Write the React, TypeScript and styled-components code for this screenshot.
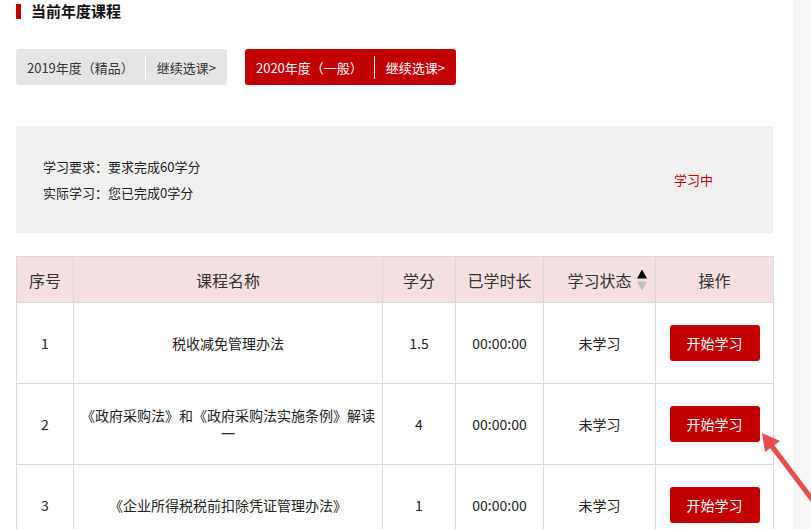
import React from 'react';
import styled, { createGlobalStyle, css } from 'styled-components';

interface Course {
    id: number;
    name: string;
    credit: string;
    duration: string;
    status: string;
}

interface YearProps {
    active?: boolean;
}

const courses: Course[] = [
    { id: 1, name: '税收减免管理办法', credit: '1.5', duration: '00:00:00', status: '未学习' },
    { id: 2, name: '《政府采购法》和《政府采购法实施条例》解读一', credit: '4', duration: '00:00:00', status: '未学习' },
    { id: 3, name: '《企业所得税税前扣除凭证管理办法》', credit: '1', duration: '00:00:00', status: '未学习' },
];

const columnWidths = [57, 309, 73, 88, 112, 118];

const GlobalStyle = createGlobalStyle`
    html, body {
        margin: 0;
        padding: 0;
        height: 529px;
        overflow: hidden;
        background: #fff;
    }
    body {
        font-family: "Microsoft YaHei", "Noto Sans CJK SC", "Noto Sans", sans-serif;
        color: #222;
    }
`

const Page = styled.div`
    position: relative;
    display: flex;
    width: 811px;
    height: 529px;
    overflow: hidden;
`

const Main = styled.div`
    width: 793px;
    box-sizing: border-box;
    padding: 0 20px 0 16px;
`

const SideStrip = styled.div`
    flex: 1;
    background: #f7f7f7;
`

const TitleRow = styled.div`
    display: flex;
    align-items: center;
    gap: 10px;
    height: 22px;
`

const TitleBar = styled.span`
    display: block;
    width: 5px;
    height: 15px;
    background: #c30000;
`

const Title = styled.h2`
    margin: 0;
    font-size: 15px;
    line-height: 22px;
    font-weight: bold;
    color: #111;
`

const YearRow = styled.div`
    display: flex;
    gap: 18px;
    margin-top: 27px;
`

const YearButton = styled.div<YearProps>`
    display: flex;
    align-items: center;
    justify-content: center;
    gap: 11px;
    width: 211px;
    height: 36px;
    border-radius: 3px;
    font-size: 13px;
    background: #e5e5e5;
    color: #333;
    cursor: pointer;

    ${({active}) => active && css`
        background: #c30000;
        color: #fff;
    `}
`

const Divider = styled.span`
    display: block;
    width: 1px;
    height: 23px;
    background: #fff;
`

const InfoBox = styled.div`
    display: flex;
    align-items: center;
    justify-content: space-between;
    height: 107px;
    margin-top: 41px;
    padding: 0 60px 0 27px;
    background: #f0f0f0;
    font-size: 13px;
`

const InfoLine = styled.div`
    line-height: 26px;
    color: #222;
`

const Status = styled.span`
    color: #c30000;
    font-size: 13px;
`

const Table = styled.table`
    width: 757px;
    margin-top: 23px;
    border-collapse: collapse;
    table-layout: fixed;
`

const HeadCell = styled.th`
    height: 45px;
    padding: 0;
    border: 1px solid #d9d9d9;
    background: #f4e0e0;
    font-size: 16px;
    font-weight: normal;
    color: #333;
    text-align: center;
`

const Cell = styled.td`
    height: 80px;
    padding: 0 6px;
    border: 1px solid #d9d9d9;
    font-size: 14px;
    line-height: 18px;
    text-align: center;
    color: #222;
`

const SortLabel = styled.span`
    position: relative;
`

const SortIcon = styled.svg`
    position: absolute;
    left: calc(100% + 5px);
    top: 50%;
    transform: translateY(-50%);
`

const StartButton = styled.button`
    width: 90px;
    height: 36px;
    border: none;
    border-radius: 3px;
    background: #c30000;
    color: #fff;
    font-family: inherit;
    font-size: 14px;
    cursor: pointer;
`

const Annotation = styled.svg`
    position: absolute;
    left: 755px;
    top: 425px;
    pointer-events: none;
`

const headers = ['序号', '课程名称', '学分', '已学时长', '学习状态', '操作'];

const App = () => {
    return (
        <Page>
            <GlobalStyle />
            <Main>
                <TitleRow>
                    <TitleBar />
                    <Title>当前年度课程</Title>
                </TitleRow>
                <YearRow>
                    <YearButton>
                        <span>2019年度（精品）</span>
                        <Divider />
                        <span>继续选课&gt;</span>
                    </YearButton>
                    <YearButton active>
                        <span>2020年度（一般）</span>
                        <Divider />
                        <span>继续选课&gt;</span>
                    </YearButton>
                </YearRow>
                <InfoBox>
                    <div>
                        <InfoLine>学习要求：要求完成60学分</InfoLine>
                        <InfoLine>实际学习：您已完成0学分</InfoLine>
                    </div>
                    <Status>学习中</Status>
                </InfoBox>
                <Table>
                    <colgroup>
                        {columnWidths.map((w, i) => <col key={i} style={{ width: w }} />)}
                    </colgroup>
                    <thead>
                        <tr>
                            {headers.map((h) => (
                                <HeadCell key={h}>
                                    {h === '学习状态' ? (
                                        <SortLabel>
                                            {h}
                                            <SortIcon width="10" height="21" viewBox="0 0 10 21">
                                                <polygon points="5,0 10,9 0,9" fill="#000" />
                                                <polygon points="0,12 10,12 5,21" fill="#bdbdbd" />
                                            </SortIcon>
                                        </SortLabel>
                                    ) : h}
                                </HeadCell>
                            ))}
                        </tr>
                    </thead>
                    <tbody>
                        {courses.map((c) => (
                            <tr key={c.id}>
                                <Cell>{c.id}</Cell>
                                <Cell>{c.name}</Cell>
                                <Cell>{c.credit}</Cell>
                                <Cell>{c.duration}</Cell>
                                <Cell>{c.status}</Cell>
                                <Cell><StartButton>开始学习</StartButton></Cell>
                            </tr>
                        ))}
                    </tbody>
                </Table>
            </Main>
            <SideStrip />
            <Annotation width="56" height="104" viewBox="0 0 56 104">
                <polygon points="7,8 10,27 25,16" fill="#e84c4c" />
                <line x1="16" y1="20" x2="72" y2="94" stroke="#e84c4c" strokeWidth="5" />
            </Annotation>
        </Page>
    );
};

export default App;
